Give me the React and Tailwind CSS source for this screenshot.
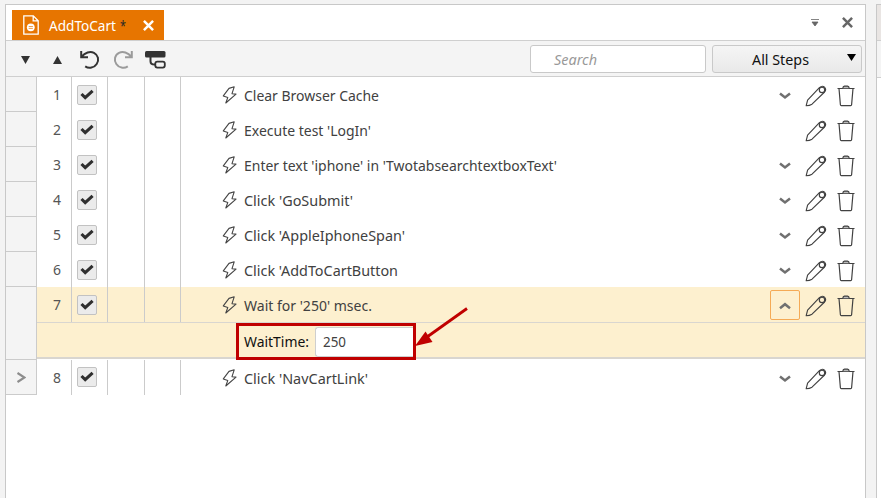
import React from 'react';

const steps = [
  { n: 1, text: 'Clear Browser Cache', w: 'w-[135px]', expand: true },
  { n: 2, text: "Execute test 'LogIn'", w: 'w-[127px]', expand: false },
  { n: 3, text: "Enter text 'iphone' in 'TwotabsearchtextboxText'", w: 'w-[313px]', expand: true },
  { n: 4, text: "Click 'GoSubmit'", w: 'w-[109px]', expand: true },
  { n: 5, text: "Click 'AppleIphoneSpan'", w: 'w-[161px]', expand: true },
  { n: 6, text: "Click 'AddToCartButton", w: 'w-[154px]', expand: true },
  { n: 7, text: "Wait for '250' msec.", w: 'w-[128px]', expand: true, open: true },
  { n: 8, text: "Click 'NavCartLink'", w: 'w-[124px]', expand: true, current: true },
];

// Single-line label whose glyphs are fitted to the width of its box.
function Label({ children, className }) {
  return (
    <svg className={`h-5 overflow-visible shrink-0 text-[14.5px] ${className}`} aria-label={children}>
      <text x="0" y="15" textLength="100%" lengthAdjust="spacingAndGlyphs" fill="currentColor">
        {children}
      </text>
    </svg>
  );
}

function Bolt() {
  return (
    <svg className="w-[15px] h-[18px] shrink-0" viewBox="0 0 15 18" fill="none" stroke="#444" strokeWidth="1.1" strokeLinejoin="round">
      <path d="M7 2.4 12.2 .8 10 7.7 14 8.1 3.8 17 5.8 11.4 1.3 9.9Z" />
    </svg>
  );
}

function Pencil() {
  return (
    <svg className="w-[22px] h-[22px] shrink-0" viewBox="0 0 22 22" fill="none" stroke="#414141" strokeWidth="1.15" strokeLinejoin="round">
      <path d="M1.2 20.7 2.6 15.1 14.4 2.7Q17.2.2 19.5 2.1 21.7 4.4 19.6 7L7 19.2Q4.6 20.6 1.2 20.7Z" />
      <circle cx="17" cy="4.9" r="2.7" />
    </svg>
  );
}

function Trash() {
  return (
    <svg className="w-[18px] h-[22px] shrink-0" viewBox="0 0 18 22" fill="none" stroke="#414141" strokeWidth="1.2" strokeLinejoin="round">
      <path d="M.5 3.5h17M2 3.5l1.4 16.3q.1 .8 .9 .8h9.4q.8 0 .9-.8L16 3.5" />
      <path d="M5.8 3.3q.2-2.2 1.6-2.2h3.2q1.4 0 1.6 2.2" fill="#bbb" />
    </svg>
  );
}

function Chevron({ up }) {
  return (
    <svg className="w-3 h-2 mt-px" viewBox="0 0 12 8" fill="none" stroke="#707070" strokeWidth="2.5">
      <path d={up ? 'M1 6.2 6 2.2 11 6.2' : 'M1 1.5 6 5.5 11 1.5'} />
    </svg>
  );
}

function Check() {
  return (
    <div className="w-5 h-5 rounded-[2px] border border-[#c2c2c2] bg-[#ebebeb] flex items-center justify-center">
      <svg className="w-[14px] h-3 -mt-px" viewBox="0 0 14 12" fill="none" stroke="#2f2f2f" strokeWidth="3.1">
        <path d="M1.5 5 5.2 8.6 12.6 1.8" />
      </svg>
    </div>
  );
}

function Cross({ className }) {
  return (
    <svg className={className} viewBox="0 0 12 12" fill="none" stroke="currentColor" strokeWidth="2.7">
      <path d="M1 1 11 11M11 1 1 11" />
    </svg>
  );
}

function StepRow({ step }) {
  const cell = 'h-full shrink-0 border-r border-[#cbcbcb]';
  return (
    <div className={`flex ${step.open ? 'h-[37px] bg-[#fdf0cf] border-b-2 border-[#d9d6d0]' : 'h-[35px]'}`}>
      <div className={`${cell} w-[35px] pt-2 pl-4 text-[#555]`}>
        <Label className="w-2">{step.n}</Label>
      </div>
      <div className={`${cell} w-9 ${step.current ? 'pt-[7px]' : 'pt-2'} pl-[5px]`}><Check /></div>
      <div className={`${cell} w-[37px]`} />
      <div className={`${cell} w-9`} />
      <div className="flex-1 flex h-[35px] pt-2 pl-[41px] text-[#414141]">
        <div className="pt-px"><Bolt /></div>
        <div className="pl-[7px] pt-px"><Label className={step.w}>{step.text}</Label></div>
      </div>
      <div className="flex h-[35px] shrink-0 pt-[3px]">
        <div className={`w-[30px] h-[30px] flex items-center justify-center ${step.open ? 'border border-[#f5aa55] rounded-[2px]' : ''}`}>
          {step.expand && <Chevron up={step.open} />}
        </div>
        <div className="pl-[5px] pt-[5px]"><Pencil /></div>
        <div className="pl-[10px] pr-[10px] pt-[5px]"><Trash /></div>
      </div>
    </div>
  );
}

export default function App() {
  return (
    <div className="relative w-[881px] h-[498px] overflow-hidden bg-[#f3f3f3] flex pt-1 pl-[5px] font-['Noto_Sans','Open_Sans',sans-serif]">
      <main className="w-[861px] shrink-0 bg-white border-t border-x border-[#c8c8c8]">
        <header className="h-9 border-b border-[#cfcfcf] flex items-start">
          <div className="ml-[6px] mt-[5px] w-[152px] h-[30px] bg-[#e77500] flex items-center text-white">
            <svg className="ml-[11px] w-4 h-5" viewBox="0 0 16 20" fill="none" stroke="white" strokeWidth="1.3">
              <path d="M.8.8h9.5l4.9 5v13.4H.8ZM10.2.8v5h5" />
              <circle cx="7.8" cy="12.3" r="3.9" fill="white" stroke="none" />
              <path d="M5.7 11.5h4.2M5.7 13.4h4.2" stroke="#e77500" strokeWidth=".7" />
            </svg>
            <Label className="ml-[10px] w-[67px] mt-px">AddToCart</Label>
            <Label className="ml-[4px] w-[6px] mt-px text-[#272727]">*</Label>
            <Cross className="ml-[17px] w-[11px] h-[11px]" />
          </div>
          <div className="ml-auto flex items-center h-[35px] text-[#666]">
            <svg className="w-2 h-[7px]" viewBox="0 0 8 7">
              <path d="M0 .5h8M1 3h6L4 7Z" stroke="#666" fill="#666" strokeWidth=".8" />
            </svg>
            <Cross className="ml-[23px] mr-3 w-[11px] h-[11px]" />
          </div>
        </header>
        <div className="h-9 bg-[#f4f4f4] border-b border-[#cfcfcf] flex items-center">
          <svg className="ml-[15px] mt-[3px] w-[9px] h-2" viewBox="0 0 9 8"><path d="M0 0h9L4.5 8Z" fill="#333" /></svg>
          <svg className="ml-[23px] mt-[2px] w-[9px] h-2" viewBox="0 0 9 8"><path d="M0 8h9L4.5 0Z" fill="#333" /></svg>
          <svg className="ml-[18px] mt-[2px] w-5 h-5" viewBox="0 0 20 20" fill="none" stroke="#333" strokeWidth="2">
            <path d="M1.2 1v6.2H8M1.7 6.7C5 2.5 10 .8 14 2.8 18.3 5 19.3 10.3 16.7 14 14.2 17.8 9 19 5.2 16.4" />
          </svg>
          <svg className="ml-[13px] mt-[2px] w-5 h-5" viewBox="0 0 20 20" fill="none" stroke="#9b9b9b" strokeWidth="2">
            <path d="M18.8 1v6.2H12M18.3 6.7C15 2.5 10 .8 6 2.8 1.7 5 .7 10.3 3.3 14 5.8 17.8 11 19 14.8 16.4" />
          </svg>
          <svg className="ml-3 mt-[2px] w-[21px] h-[18px]" viewBox="0 0 21 18" fill="none" stroke="#333">
            <rect x="0" y="0" width="20.5" height="6.5" rx="1.5" fill="#333" stroke="none" />
            <path d="M5.5 6v4.2q0 3.3 4 3.3h1" strokeWidth="2" />
            <rect x="10.3" y="10.6" width="9.5" height="6" rx="2" strokeWidth="1.8" />
          </svg>
          <div className="ml-auto w-[176px] h-7 mt-px rounded-[3px] border border-[#c9c9c9] bg-white flex items-center pl-[23px] italic text-[#999]">
            <Label className="w-[43px] mt-[2px]">Search</Label>
          </div>
          <div className="ml-[6px] mr-[3px] w-[150px] h-7 mt-px rounded-[3px] border border-[#c9c9c9] bg-gradient-to-b from-[#f5f5f5] to-[#e9e9e9] flex items-center text-[#111]">
            <Label className="ml-[39px] w-[57px] mt-[2px]">All Steps</Label>
            <svg className="ml-auto mr-[5px] mb-1 w-[9px] h-[7px]" viewBox="0 0 9 7"><path d="M0 0h9L4.5 7Z" fill="#000" /></svg>
          </div>
        </div>
        <div className="flex">
          <div className="w-[31px] shrink-0 bg-[#f4f4f4] border-r border-[#cbcbcb] h-[318px]">
            {steps.map((s) => (
              <div
                key={s.n}
                className={`flex items-center justify-center ${s.open ? 'h-[73px]' : 'h-[35px]'} border-b border-[#cbcbcb]`}
              >
                {s.current && (
                  <svg className="w-[9px] h-[11px]" viewBox="0 0 9 11" fill="none" stroke="#8d8d8d" strokeWidth="2.2">
                    <path d="M.5 1 7.5 5.5 .5 10" />
                  </svg>
                )}
              </div>
            ))}
          </div>
          <div className="flex-1 min-w-0">
            {steps.map((s) => (
              <React.Fragment key={s.n}>
                <StepRow step={s} />
                {s.open && (
                  <div className="h-[36px] mb-px bg-[#fdf0cf] border-b-2 border-[#d9d6d0] pl-[199px]">
                    <div className="relative -mt-px w-[180px] h-[37px] border-[3px] border-[#c00000] flex items-center pl-[5px]">
                      <Label className="w-[65px] text-[#111]">WaitTime:</Label>
                      <div className="ml-[6px] flex-1 h-[30px] rounded-l-[3px] border border-r-0 border-[#cfcfcf] bg-white flex items-center pl-[7px] text-[#414141]">
                        <Label className="w-[23px] mt-px">250</Label>
                      </div>
                      <svg className="absolute left-[176px] -top-[19px] w-[54px] h-[44px]" viewBox="0 0 54 44">
                        <path d="M52 1.5 12 30" stroke="#c00000" strokeWidth="2.8" />
                        <path d="M0 39 10.5 24.5 17.5 35Z" fill="#c00000" />
                      </svg>
                    </div>
                  </div>
                )}
              </React.Fragment>
            ))}
          </div>
        </div>
      </main>
      <aside className="ml-[10px] w-[5px] shrink-0 border-l border-t border-[#c8c8c8] bg-white">
        <div className="h-9 bg-[#e9e5e3] border-b border-[#cfcfcf]" />
        <div className="h-[37px] bg-[#f4f4f4] border-b border-[#cfcfcf]" />
      </aside>
    </div>
  );
}
